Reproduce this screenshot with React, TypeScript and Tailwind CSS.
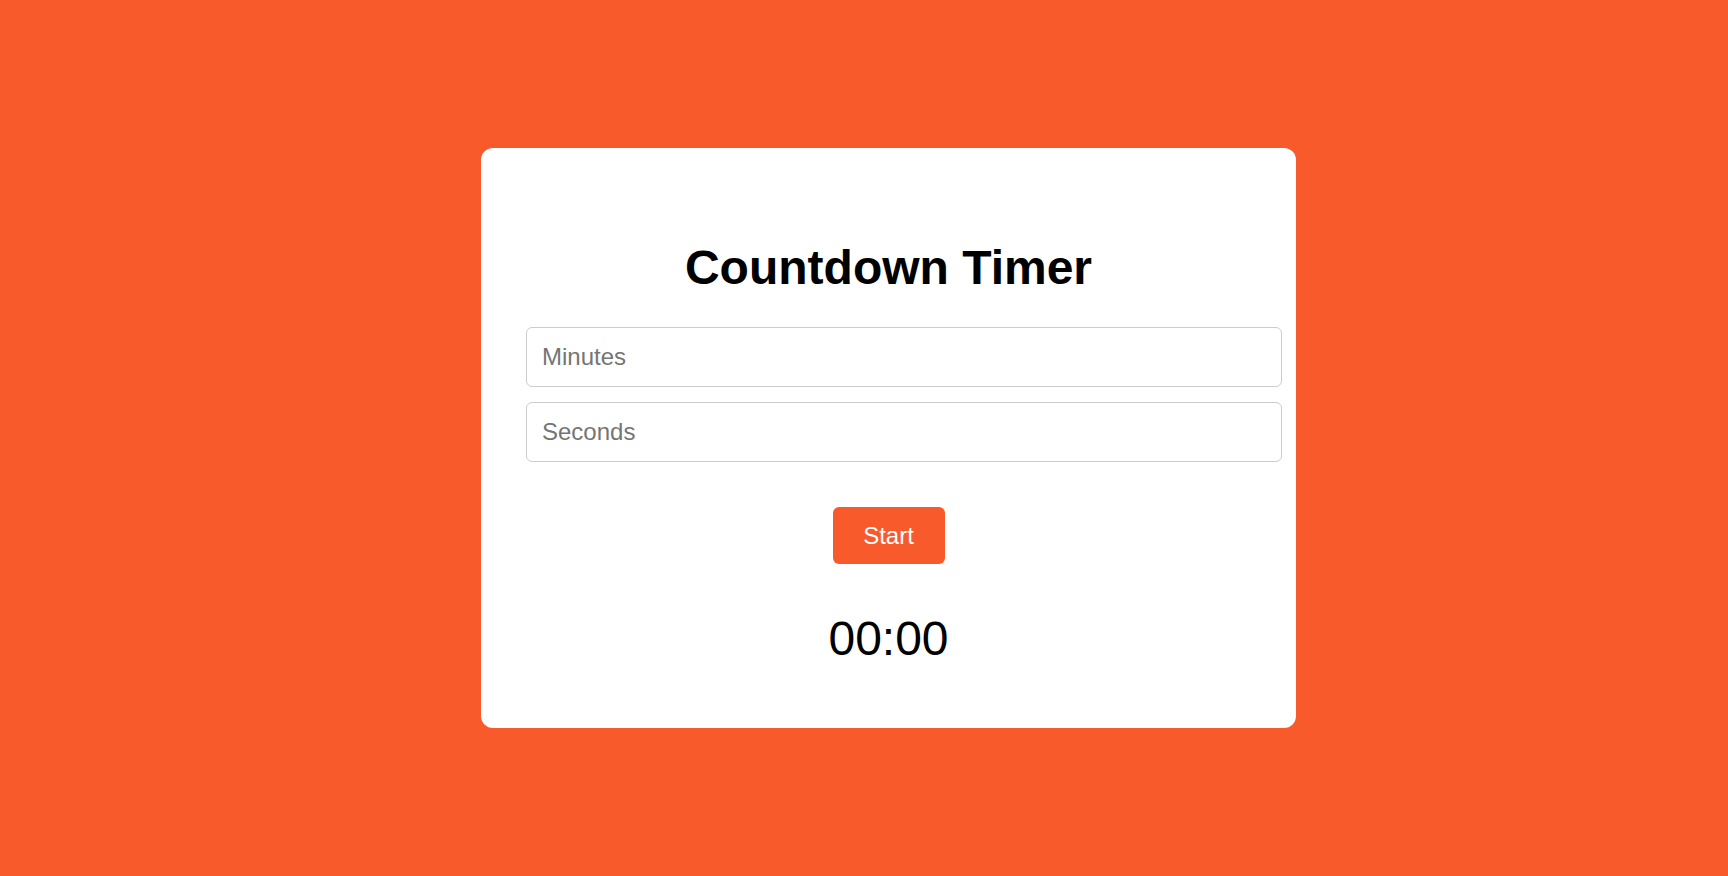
import React from "react";

export default function App() {
  return (
    <div
      className="w-full h-[876px] bg-[#f85a2c] flex items-center pl-[481px]"
      style={{ fontFamily: '"Liberation Sans", Arial, sans-serif' }}
    >
      <div className="w-[815px] h-[580px] bg-white rounded-[12px] pt-[92px] flex flex-col">
        <h1 className="text-center text-[48px] leading-[56px] h-[56px] font-bold text-black">
          Countdown Timer
        </h1>
        <input
          type="number"
          placeholder="Minutes"
          className="mt-[31px] ml-[45px] w-[756px] h-[60px] border border-[#cccccc] rounded-[6px] px-[15px] text-[24px] text-black placeholder:text-[#757575] outline-none"
        />
        <input
          type="number"
          placeholder="Seconds"
          className="mt-[15px] ml-[45px] w-[756px] h-[60px] border border-[#cccccc] rounded-[6px] px-[15px] text-[24px] text-black placeholder:text-[#757575] outline-none"
        />
        <button className="mt-[45px] mx-auto w-[112px] h-[57px] bg-[#f85a2c] text-white text-[24px] rounded-[6px]">
          Start
        </button>
        <div className="mt-[47px] text-center text-[48px] leading-[56px] text-black">
          00:00
        </div>
      </div>
    </div>
  );
}
